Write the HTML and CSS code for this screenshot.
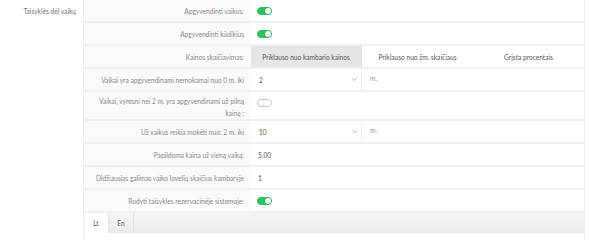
FILE: index.html
```html
<!DOCTYPE html>
<html lang="lt">
<head>
  <meta charset="utf-8">
  <title>Taisyklės dėl vaikų</title>
  <link rel="stylesheet" href="styles.css">
</head>
<body>
  <div class="page">
    <div class="side">Taisyklės dėl vaikų</div>
    <div class="panel">
      <div class="row">
        <div class="label">Apgyvendinti vaikus:</div>
        <div class="value"><span class="toggle on"></span></div>
      </div>
      <div class="row">
        <div class="label">Apgyvendinti kūdikius</div>
        <div class="value"><span class="toggle on"></span></div>
      </div>
      <div class="row">
        <div class="label">Kainos skaičiavimas:</div>
        <div class="value tabs">
          <span class="tab active">Priklauso nuo kambario kainos</span>
          <span class="tab">Priklauso nuo žm. skaičiaus</span>
          <span class="tab">Grįsta procentais</span>
        </div>
      </div>
      <div class="row">
        <div class="label">Vaikai yra apgyvendinami nemokamai nuo 0 m. iki</div>
        <div class="value select-wrap">
          <span class="select">2
            <svg viewBox="0 0 10 6" class="chev"><path d="M1 1l4 4 4-4" fill="none" stroke="#888" stroke-width="1.2"/></svg>
          </span>
          <span class="unit">m.</span>
        </div>
      </div>
      <div class="row tall">
        <div class="label">Vaikai, vyresni nei 2 m. yra apgyvendinami už pilną kainą :</div>
        <div class="value top"><span class="toggle"></span></div>
      </div>
      <div class="row">
        <div class="label">Už vaikus reikia mokėti nuo: 2 m. iki</div>
        <div class="value select-wrap">
          <span class="select">10
            <svg viewBox="0 0 10 6" class="chev"><path d="M1 1l4 4 4-4" fill="none" stroke="#888" stroke-width="1.2"/></svg>
          </span>
          <span class="unit">m.</span>
        </div>
      </div>
      <div class="row">
        <div class="label">Papildoma kaina už vieną vaiką:</div>
        <div class="value text">5.00</div>
      </div>
      <div class="row">
        <div class="label">Didžiausias galimas vaiko lovelių skaičius kambaryje</div>
        <div class="value text">1</div>
      </div>
      <div class="row">
        <div class="label">Rodyti taisykles rezervacinėje sistemoje:</div>
        <div class="value"><span class="toggle on"></span></div>
      </div>
      <div class="langs">
        <span class="lang active">Lt</span>
        <span class="lang">En</span>
      </div>
    </div>
  </div>
</body>
</html>
```

FILE: styles.css
```css
body {
  margin: 0;
  background: white;
  font-family: "Lato", "Open Sans", sans-serif;
  font-size: 6.6px;
  color: #555;
}
.page {
  display: flex;
  width: 591px;
  height: 240px;
}
.side {
  width: 76px;
  padding: 5px 7px 0 0;
  text-align: right;
  color: #777;
  border-right: 1px solid #eee;
  line-height: 12px;
}
.panel {
  width: 500px;
  border-right: 1px solid #eee;
}
.row {
  display: grid;
  grid-template-columns: 167px 1fr;
  height: 21px;
  border-bottom: 2px solid #f1f1f1;
}
.row.tall {
  height: 27px;
}
.label {
  background: #fafafa;
  color: #888;
  text-align: right;
  padding: 5px 7px 0 0;
  line-height: 12px;
}
.row.tall .label {
  padding-top: 3px;
  padding-left: 10px;
}
.value {
  display: flex;
  align-items: center;
  padding-left: 6px;
}
.value.top {
  align-items: flex-start;
  padding-top: 7px;
}
.value.text {
  padding-left: 7px;
}
.toggle {
  display: inline-block;
  position: relative;
  width: 15px;
  height: 8px;
  border-radius: 4px;
  background: white;
  border: 1px solid #ccc;
  box-sizing: border-box;
}
.toggle::after {
  content: "";
  position: absolute;
  top: 0;
  left: 0;
  width: 6px;
  height: 6px;
  border-radius: 50%;
  background: white;
  box-shadow: 0 0 1px rgba(0,0,0,0.4);
}
.toggle.on {
  background: #2cc25e;
  border-color: #2cc25e;
}
.toggle.on::after {
  left: 7px;
}
.tabs {
  padding: 0;
  display: grid;
  grid-template-columns: repeat(3, 1fr);
  align-items: stretch;
}
.tab {
  display: flex;
  align-items: center;
  justify-content: center;
  color: #555;
}
.tab.active {
  background: #e6e6e6;
  border-right: 1px solid #ddd;
}
.select-wrap {
  padding: 0;
  align-items: stretch;
}
.select {
  width: 111px;
  display: flex;
  align-items: center;
  justify-content: space-between;
  padding: 0 4px 0 8px;
  box-sizing: border-box;
  border-right: 1px solid #f2f2f2;
}
.chev {
  width: 5px;
  height: 3px;
}
.unit {
  padding: 5px 0 0 8px;
  color: #999;
}
.langs {
  display: flex;
  height: 20px;
  background: linear-gradient(#f5f5f5, #ebebeb);
}
.lang {
  width: 24px;
  display: flex;
  align-items: center;
  justify-content: center;
  color: #555;
  border-right: 1px solid #e2e2e2;
}
.lang.active {
  background: white;
}
```
